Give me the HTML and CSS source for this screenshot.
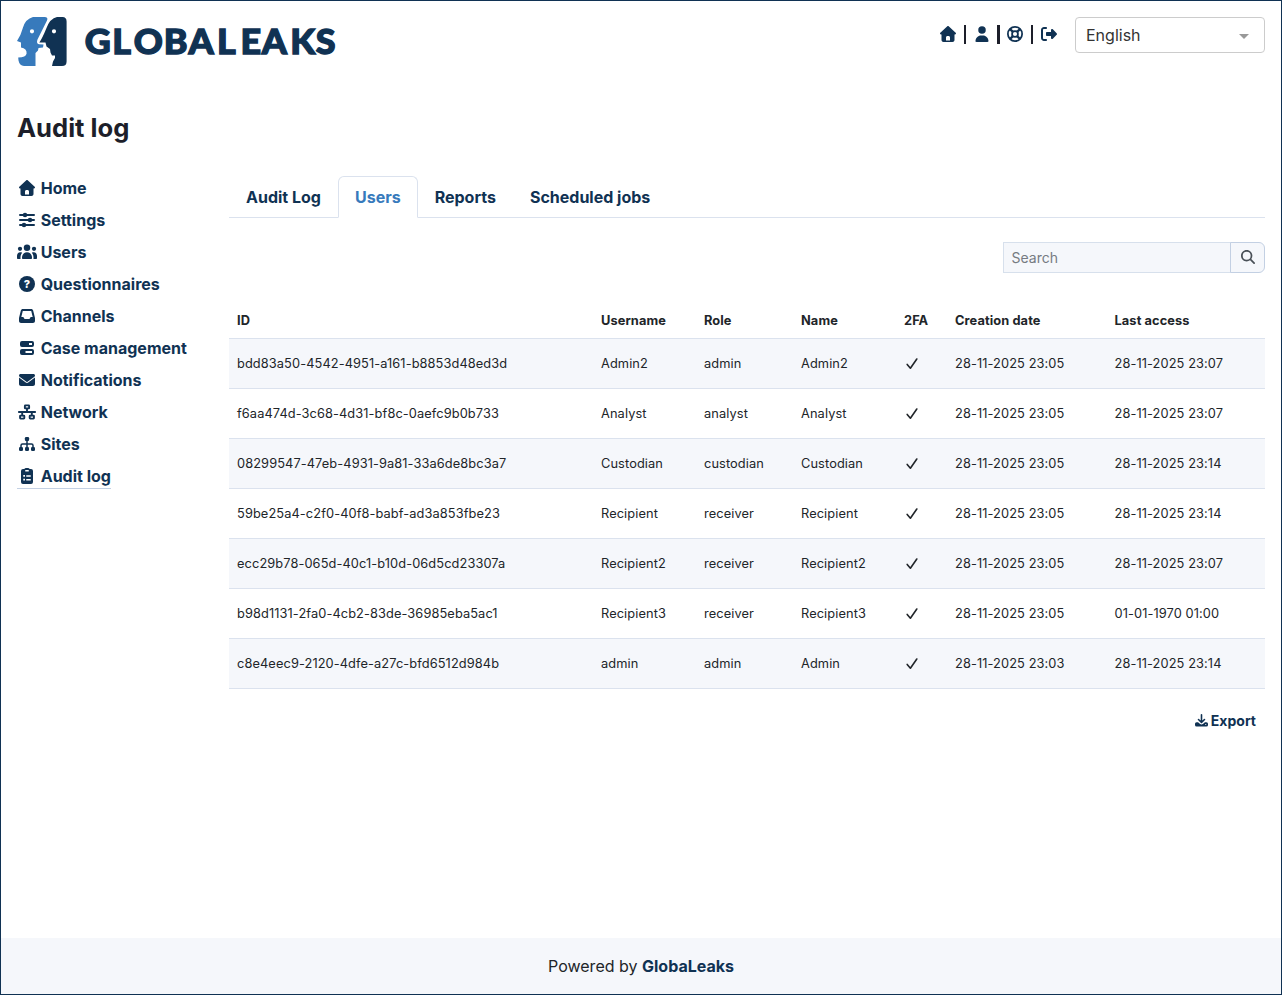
FILE: index.html
```html
<!doctype html>
<html lang="en">
<head>
    <meta charset="UTF-8">
    <meta name="viewport" content="width=device-width, initial-scale=1.0">
    <title>Audit log</title>
    <link rel="stylesheet" href="styles.css">
</head>
<body>
    <!-- icons -->
    <svg class="sprite">
        <symbol id="house" viewBox="-64 0 640 512"><path d="M277.8 8.6c-12.3-11.4-31.3-11.4-43.5 0l-224 208c-9.6 9-12.8 22.9-8 35.1S18.8 272 32 272l16 0 0 176c0 35.3 28.7 64 64 64l288 0c35.3 0 64-28.7 64-64l0-176 16 0c13.2 0 25-8.1 29.8-20.3s1.6-26.2-8-35.1l-224-208zM240 320l32 0c26.5 0 48 21.5 48 48l0 96-128 0 0-96c0-26.5 21.5-48 48-48z"/></symbol>
        <symbol id="user" viewBox="-96 0 640 512"><path d="M224 248a120 120 0 1 0 0-240 120 120 0 1 0 0 240zm-29.7 56C95.8 304 16 383.8 16 482.3 16 498.7 29.3 512 45.7 512l356.6 0c16.4 0 29.7-13.3 29.7-29.7 0-98.5-79.8-178.3-178.3-178.3l-59.4 0z"/></symbol>
        <symbol id="ring" viewBox="-64 0 640 512">
            <g fill="none" stroke="currentColor">
                <circle cx="256" cy="256" r="228" stroke-width="56"/>
                <circle cx="256" cy="256" r="94" stroke-width="56"/>
                <path d="M95 95l95 95M417 95l-95 95M95 417l95-95M417 417l-95-95" stroke-width="76"/>
            </g>
        </symbol>
        <symbol id="exit" viewBox="-64 0 640 512"><path d="M377.9 105.9L500.7 228.7c7.2 7.2 11.3 17.1 11.3 27.3s-4.1 20.1-11.3 27.3L377.9 406.1c-6.4 6.4-15 9.9-24 9.9c-18.7 0-33.9-15.2-33.9-33.9l0-62.1-128 0c-17.7 0-32-14.3-32-32l0-64c0-17.7 14.3-32 32-32l128 0 0-62.1c0-18.7 15.2-33.9 33.9-33.9c9 0 17.6 3.6 24 9.9zM160 96L96 96c-17.7 0-32 14.3-32 32l0 256c0 17.7 14.3 32 32 32l64 0c17.7 0 32 14.3 32 32s-14.3 32-32 32l-64 0c-53 0-96-43-96-96L0 128C0 75 43 32 96 32l64 0c17.7 0 32 14.3 32 32s-14.3 32-32 32z"/></symbol>
        <symbol id="sliders" viewBox="-64 0 640 512">
            <path d="M32 96h448M32 256h448M32 416h448" fill="none" stroke="currentColor" stroke-width="64" stroke-linecap="round"/>
            <circle cx="192" cy="96" r="72"/><circle cx="352" cy="256" r="72"/><circle cx="160" cy="416" r="72"/>
        </symbol>
        <symbol id="users" viewBox="0 0 640 512">
            <circle cx="320" cy="120" r="104"/><circle cx="96" cy="152" r="68"/><circle cx="544" cy="152" r="68"/>
            <path d="M160 448c0-106 60-184 160-184s160 78 160 184c0 18-14 32-32 32H192c-18 0-32-14-32-32z"/>
            <path d="M0 448v-64c0-71 43-120 104-120 24 0 44 5 60 16-36 45-54 97-54 168 0 12 2 22 6 32H32c-18 0-32-14-32-32zM640 448v-64c0-71-43-120-104-120-24 0-44 5-60 16 36 45 54 97 54 168 0 12-2 22-6 32h84c18 0 32-14 32-32z"/>
        </symbol>
        <symbol id="inbox" viewBox="-64 0 640 512"><path d="M121 32C91.6 32 66 52 58.9 80.5L1.9 308.4C.6 313.5 0 318.7 0 323.9L0 416c0 35.3 28.7 64 64 64l384 0c35.3 0 64-28.7 64-64l0-92.1c0-5.2-.6-10.4-1.9-15.5l-57-227.9C446 52 420.4 32 391 32L121 32zm0 64l270 0 48 192-51.2 0c-12.1 0-23.2 6.8-28.6 17.7l-14.3 28.6c-5.4 10.8-16.5 17.7-28.6 17.7l-120.4 0c-12.1 0-23.2-6.8-28.6-17.7l-14.3-28.6c-5.4-10.8-16.5-17.7-28.6-17.7L73 288 121 96z"/></symbol>
        <symbol id="server" viewBox="-96 0 640 512"><path fill-rule="evenodd" d="M64 32h320a64 64 0 0 1 64 64v64a64 64 0 0 1-64 64H64a64 64 0 0 1-64-64V96a64 64 0 0 1 64-64zM288 96v64h96V96zM64 288h320a64 64 0 0 1 64 64v64a64 64 0 0 1-64 64H64a64 64 0 0 1-64-64v-64a64 64 0 0 1 64-64zM176 352v64h208v-64z"/></symbol>
        <symbol id="envelope" viewBox="-64 0 640 512"><path d="M48 64C21.5 64 0 85.5 0 112c0 15.1 7.1 29.3 19.2 38.4L236.8 313.6c11.4 8.5 27 8.5 38.4 0L492.8 150.4c12.1-9.1 19.2-23.3 19.2-38.4c0-26.5-21.5-48-48-48L48 64zM0 176L0 384c0 35.3 28.7 64 64 64l384 0c35.3 0 64-28.7 64-64l0-208L294.4 339.2c-22.8 17.1-54 17.1-76.8 0L0 176z"/></symbol>
        <symbol id="network" viewBox="0 0 640 512">
            <g fill="none" stroke="currentColor" stroke-width="60" stroke-linejoin="round" stroke-linecap="round">
                <rect x="252" y="44" width="136" height="96" rx="16"/>
                <rect x="98" y="370" width="136" height="96" rx="16"/>
                <rect x="406" y="370" width="136" height="96" rx="16"/>
                <path d="M60 256h520M320 150v106M166 256v106M474 256v106"/>
            </g>
        </symbol>
        <symbol id="sitemap" viewBox="-64 0 640 512">
            <rect x="188" y="32" width="136" height="128" rx="40"/>
            <rect x="0" y="352" width="128" height="128" rx="40"/>
            <rect x="192" y="352" width="128" height="128" rx="40"/>
            <rect x="384" y="352" width="128" height="128" rx="40"/>
            <path d="M256 140v220M64 360v-56q0-48 48-48h288q48 0 48 48v56" fill="none" stroke="currentColor" stroke-width="48"/>
        </symbol>
        <symbol id="clipboard" viewBox="-128 0 640 512"><path fill-rule="evenodd" d="M64 32h42a64 64 0 0 1 54-32h64a64 64 0 0 1 54 32h42a64 64 0 0 1 64 64v352a64 64 0 0 1-64 64H64a64 64 0 0 1-64-64V96a64 64 0 0 1 64-64zM136 64v48h112V64zM72 224v56h56v-56zM168 228v48h144v-48zM72 344v56h56v-56zM168 348v48h144v-48z"/></symbol>
        <symbol id="search" viewBox="0 0 512 512"><path d="M416 208c0 45.9-14.9 88.3-40 122.7L502.6 457.4c12.5 12.5 12.5 32.8 0 45.3s-32.8 12.5-45.3 0L330.7 376c-34.4 25.2-76.8 40-122.7 40C93.1 416 0 322.9 0 208S93.1 0 208 0S416 93.1 416 208zM208 352a144 144 0 1 0 0-288 144 144 0 1 0 0 288z"/></symbol>
        <symbol id="check" viewBox="0 0 16 13"><path d="M3.2 7.4L6.4 11.2L12.8 2" fill="none" stroke="currentColor" stroke-width="1.6" stroke-linecap="round" stroke-linejoin="round"/></symbol>
        <symbol id="download" viewBox="0 0 512 512">
            <path d="M256 32v290M138 218l118 118 118-118" fill="none" stroke="currentColor" stroke-width="62" stroke-linecap="round" stroke-linejoin="round"/>
            <path fill-rule="evenodd" d="M64 320h56l70 68q66 56 132 0l70-68h56a64 64 0 0 1 64 64v48a64 64 0 0 1-64 64H64a64 64 0 0 1-64-64v-48a64 64 0 0 1 64-64zM424 390a24 24 0 1 0 0 48 24 24 0 1 0 0-48z"/>
        </symbol>
    </svg>

    <header>
        <svg class="logo" width="322" height="50" viewBox="0 0 322 50">
            <path fill="#377abc" fill-rule="evenodd" d="M16 0H27.500Q31.500 0 30 3.500L20.500 22.500Q19 26.500 22 27.200L26.500 27.500L26 30.500L21.500 31L21 33.500L18.500 36V49H7Q2.500 48.500 1.500 43.500L1.200 40.500Q9 40.500 9.600 36.500Q10 31.500 4 30.500V25.500L0 24Q4 18 6 10.500Q8.500 2 16 0zM15 12.200a2.100 2.100 0 1 0 0 4.200 2.100 2.100 0 1 0 0-4.200z"/>
            <path fill="#103253" fill-rule="evenodd" d="M40 0H45.500Q49.600 0 49.600 4.500V44.500Q49.600 49 45 49H35L36 44.500L38 41V38.500L35 38.500L33.500 35.500L33 32L29.500 29.500L28.500 25.500H22.300Q25 22 29.500 11Q33 1.500 40 0zM37 12.200a2.100 2.100 0 1 0 0 4.200 2.100 2.100 0 1 0 0-4.200z"/>
            <text class="brand" transform="scale(1.04 1)" x="65.100 91.600 112.200 141.200 164.900 192.400 215 235.300 262.800 287.300" y="37.200">GLOBALEAKS</text>
        </svg>
        <div class="tools">
            <svg class="icon"><use href="#house"/></svg>
            <span class="bar"></span>
            <svg class="icon"><use href="#user"/></svg>
            <span class="bar"></span>
            <svg class="icon"><use href="#ring"/></svg>
            <span class="bar"></span>
            <svg class="icon"><use href="#exit"/></svg>
            <div class="language"><span>English</span><i class="caret"></i></div>
        </div>
    </header>

    <h1>Audit log</h1>

    <div class="content">
        <nav>
            <a href="#"><svg class="icon"><use href="#house"/></svg>Home</a>
            <a href="#"><svg class="icon"><use href="#sliders"/></svg>Settings</a>
            <a href="#"><svg class="icon"><use href="#users"/></svg>Users</a>
            <a href="#"><span class="icon question"><i>?</i></span>Questionnaires</a>
            <a href="#"><svg class="icon"><use href="#inbox"/></svg>Channels</a>
            <a href="#"><svg class="icon"><use href="#server"/></svg>Case management</a>
            <a href="#"><svg class="icon"><use href="#envelope"/></svg>Notifications</a>
            <a href="#"><svg class="icon"><use href="#network"/></svg>Network</a>
            <a href="#"><svg class="icon"><use href="#sitemap"/></svg>Sites</a>
            <a href="#" class="active"><svg class="icon"><use href="#clipboard"/></svg>Audit log</a>
        </nav>

        <main>
            <div class="tabs">
                <a href="#">Audit Log</a>
                <a href="#" class="active">Users</a>
                <a href="#">Reports</a>
                <a href="#">Scheduled jobs</a>
            </div>

            <div class="search">
                <input type="text" placeholder="Search">
                <button><svg><use href="#search"/></svg></button>
            </div>

            <table>
                <colgroup>
                    <col class="c-id"><col class="c-username"><col class="c-role"><col class="c-name"><col class="c-2fa"><col class="c-date"><col>
                </colgroup>
                <thead>
                    <tr><th>ID</th><th>Username</th><th>Role</th><th>Name</th><th>2FA</th><th>Creation date</th><th>Last access</th></tr>
                </thead>
                <tbody>
                    <tr><td>bdd83a50-4542-4951-a161-b8853d48ed3d</td><td>Admin2</td><td>admin</td><td>Admin2</td><td><svg class="check"><use href="#check"/></svg></td><td>28-11-2025 23:05</td><td>28-11-2025 23:07</td></tr>
                    <tr><td>f6aa474d-3c68-4d31-bf8c-0aefc9b0b733</td><td>Analyst</td><td>analyst</td><td>Analyst</td><td><svg class="check"><use href="#check"/></svg></td><td>28-11-2025 23:05</td><td>28-11-2025 23:07</td></tr>
                    <tr><td>08299547-47eb-4931-9a81-33a6de8bc3a7</td><td>Custodian</td><td>custodian</td><td>Custodian</td><td><svg class="check"><use href="#check"/></svg></td><td>28-11-2025 23:05</td><td>28-11-2025 23:14</td></tr>
                    <tr><td>59be25a4-c2f0-40f8-babf-ad3a853fbe23</td><td>Recipient</td><td>receiver</td><td>Recipient</td><td><svg class="check"><use href="#check"/></svg></td><td>28-11-2025 23:05</td><td>28-11-2025 23:14</td></tr>
                    <tr><td>ecc29b78-065d-40c1-b10d-06d5cd23307a</td><td>Recipient2</td><td>receiver</td><td>Recipient2</td><td><svg class="check"><use href="#check"/></svg></td><td>28-11-2025 23:05</td><td>28-11-2025 23:07</td></tr>
                    <tr><td>b98d1131-2fa0-4cb2-83de-36985eba5ac1</td><td>Recipient3</td><td>receiver</td><td>Recipient3</td><td><svg class="check"><use href="#check"/></svg></td><td>28-11-2025 23:05</td><td>01-01-1970 01:00</td></tr>
                    <tr><td>c8e4eec9-2120-4dfe-a27c-bfd6512d984b</td><td>admin</td><td>admin</td><td>Admin</td><td><svg class="check"><use href="#check"/></svg></td><td>28-11-2025 23:03</td><td>28-11-2025 23:14</td></tr>
                </tbody>
            </table>

            <button class="export"><svg><use href="#download"/></svg>Export</button>
        </main>
    </div>

    <footer>Powered by&nbsp;<a href="#">GlobaLeaks</a></footer>
</body>
</html>
```
FILE: styles.css
```css
* {
    box-sizing: border-box;
    margin: 0;
    padding: 0;
}

body {
    display: flex;
    flex-direction: column;
    height: 995px;
    border: 1px solid #103253;
    background: #fff;
    color: #212529;
    font: 16px/24px Inter, sans-serif;
}

a {
    color: #103253;
    font-weight: 700;
    text-decoration: none;
}

svg {
    display: block;
    fill: currentColor;
}

.sprite {
    position: absolute;
    width: 0;
    height: 0;
}

.icon {
    width: 20px;
    height: 16px;
    color: #103253;
}

.question {
    padding: 0 2px;
}

.question i {
    display: block;
    border-radius: 50%;
    background: #103253;
    color: #fff;
    font: 800 11px/16px Inter, sans-serif;
    text-align: center;
}

/* header */
header {
    display: flex;
    justify-content: space-between;
    padding: 16px 16px 0;
}

.brand {
    fill: #103253;
    stroke: #103253;
    stroke-width: 1.3px;
    font: 900 34.500px Lato, sans-serif;
}

.tools {
    display: flex;
    align-items: flex-start;
    gap: 5.5px;
}

.tools .icon {
    margin-top: 9px;
}

.bar {
    width: 2.5px;
    height: 19px;
    margin-top: 8px;
    background: #1d1f2a;
}

.language {
    display: flex;
    align-items: center;
    justify-content: space-between;
    width: 190px;
    height: 36px;
    margin-left: 11px;
    padding: 0 15px 0 10px;
    border: 1px solid #ccc;
    border-radius: 4px;
    color: #333;
}

.caret {
    margin-top: 3px;
    border: 5px solid transparent;
    border-top-color: #999;
    border-bottom: 0;
}

h1 {
    margin: 45px 16px 0;
    color: #1d1f2a;
    font-size: 25.6px;
    font-weight: 700;
    line-height: 31px;
}

.content {
    display: flex;
    flex: 1;
    padding: 33px 16px 0;
}

/* menu */
nav {
    display: flex;
    flex-direction: column;
    align-items: flex-start;
    width: 212px;
}

nav a {
    display: flex;
    align-items: center;
    gap: 3.7px;
    height: 25px;
    margin-bottom: 7px;
    border-bottom: 1px solid transparent;
}

nav a.active {
    border-bottom-color: #c3d0e3;
}

main {
    display: flex;
    flex-direction: column;
    flex: 1;
}

/* tabs */
.tabs {
    display: flex;
    height: 42px;
    border-bottom: 1px solid #dbe2ee;
}

.tabs a {
    height: 42px;
    padding: 8px 16px;
    border: 1px solid transparent;
}

.tabs .active {
    border-color: #dbe2ee #dbe2ee #fff;
    border-radius: 6px 6px 0 0;
    background: #fff;
    color: #377abc;
}

/* search */
.search {
    display: flex;
    align-self: flex-end;
    width: 262px;
    height: 31px;
    margin-top: 24px;
}

.search input {
    flex: 1;
    min-width: 0;
    padding: 0 8px 0 7.5px;
    border: 1px solid #d7e0ec;
    background: #f5f7fb;
    font: 14px Inter, sans-serif;
}

.search input::placeholder {
    color: #757b82;
}

.search button {
    display: flex;
    align-items: center;
    justify-content: center;
    width: 35px;
    margin-left: -1px;
    padding-bottom: 2px;
    border: 1px solid #c3d0e3;
    border-radius: 0 6px 6px 0;
    background: #f5f7fb;
    color: #495057;
}

.search svg {
    width: 14px;
    height: 14px;
}

/* table */
table {
    width: 100%;
    margin-top: 29px;
    border-spacing: 0;
    table-layout: fixed;
    font-size: 12.8px;
    letter-spacing: .1px;
    line-height: 20px;
}

.c-id { width: 364px; }
.c-username { width: 103px; }
.c-role { width: 97px; }
.c-name { width: 103px; }
.c-2fa { width: 51px; }
.c-date { width: 159.5px; }

th,
td {
    height: 50px;
    padding: 0 8px;
    border-bottom: 1px solid #dbe2ee;
    text-align: left;
    white-space: nowrap;
}

th {
    height: 37px;
    padding-top: 2px;
    font-weight: 700;
}

tbody tr:nth-child(odd) {
    background: #f5f7fb;
}

.check {
    width: 16px;
    height: 13px;
}

.export {
    display: flex;
    align-items: center;
    align-self: flex-end;
    gap: 3px;
    margin: 21px 9px 0 0;
    border: 0;
    background: none;
    color: #103253;
    font: 700 14px/21px Inter, sans-serif;
}

.export svg {
    width: 13px;
    height: 13px;
}

footer {
    display: flex;
    align-items: center;
    justify-content: center;
    height: 56px;
    background: #f5f7fb;
}
```
